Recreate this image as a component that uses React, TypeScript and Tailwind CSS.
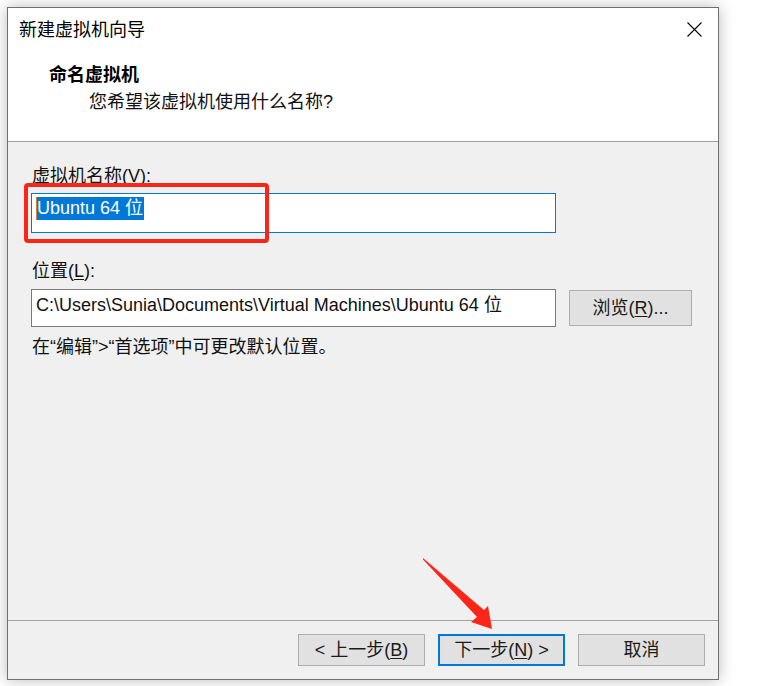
import React from "react";

const F = "font-['Liberation_Sans','Noto_Sans_CJK_SC',sans-serif]";

function Btn({ children, primary }: { children: React.ReactNode; primary?: boolean }) {
  return (
    <div
      className={
        "w-[127px] h-[32px] flex items-center justify-center bg-[#e1e1e1] text-[18px] leading-[24px] text-[#1a1a1a] " +
        (primary ? "border-2 border-[#0078d7]" : "border border-[#adadad]")
      }
    >
      {children}
    </div>
  );
}

export default function App() {
  return (
    <div className={"relative w-[769px] h-[686px] bg-white pt-[7px] pl-[7px] overflow-hidden " + F}>
      <div className="relative w-[712px] h-[673px] border border-[#707070] bg-[#f0f0f0] flex flex-col shadow-[0_0_14px_rgba(0,0,0,0.28)]">
        {/* header */}
        <div className="h-[134px] bg-white border-b border-[#a0a0a0] flex flex-col">
          <div className="mt-[10px] h-[24px] flex items-center justify-between pl-[11px] pr-[16px]">
            <span className="text-[18px] leading-[24px] text-black">新建虚拟机向导</span>
            <svg width="15" height="15" viewBox="0 0 15 15" className="mt-[-2px]">
              <path d="M0.5 0.5 L14.5 14.5 M14.5 0.5 L0.5 14.5" stroke="#000" strokeWidth="1.1" fill="none" />
            </svg>
          </div>
          <div className="mt-[21px] pl-[41px] text-[18px] leading-[24px] font-bold text-black">命名虚拟机</div>
          <div className="mt-[3px] pl-[81px] text-[18px] leading-[24px] text-[#111]">您希望该虚拟机使用什么名称?</div>
        </div>

        {/* body */}
        <div className="flex-1 flex flex-col pl-[23px] pt-[22px]">
          <div className="pl-[1px] text-[18px] leading-[24px] text-[#111]">
            虚拟机名称(<span className="underline underline-offset-2">V</span>):
          </div>
          <div className="mt-[5px] w-[525px] h-[40px] bg-white border border-[#0078d7] flex items-start pt-[3px] pl-[4px]">
            <span className="w-[1px] h-[23px] bg-[#e07a2a]"></span>
            <span className="h-[23px] bg-[#0078d7] text-white text-[18px] leading-[23px] pr-[1px]">Ubuntu 64 位</span>
          </div>

          <div className="mt-[26px] pl-[1px] text-[18px] leading-[24px] text-[#111]">
            位置(<span className="underline underline-offset-2">L</span>):
          </div>
          <div className="mt-[6px] flex items-center gap-[13px]">
            <div className="w-[525px] h-[38px] bg-white border border-[#7a7a7a] flex items-start pt-[3px] pl-[4px] text-[18px] leading-[24px] text-[#111]">
              C:\Users\Sunia\Documents\Virtual Machines\Ubuntu 64 位
            </div>
            <div className="w-[123px] h-[36px] bg-[#e1e1e1] border border-[#adadad] flex items-center justify-center text-[18px] leading-[24px] text-[#1a1a1a]">
              浏览(<span className="underline underline-offset-2">R</span>)...
            </div>
          </div>
          <div className="mt-[8px] pl-[1px] text-[18px] leading-[24px] text-[#111]">
            在“编辑”&gt;“首选项”中可更改默认位置。
          </div>
        </div>

        {/* footer */}
        <div className="h-[59px] border-t border-[#a0a0a0] flex justify-end items-start pt-[13px] pr-[13px] gap-[13px]">
          <Btn>
            &lt; 上一步(<span className="underline underline-offset-2">B</span>)
          </Btn>
          <Btn primary>
            下一步(<span className="underline underline-offset-2">N</span>) &gt;
          </Btn>
          <Btn>取消</Btn>
        </div>

        {/* red highlight box */}
        <div className="absolute left-[16px] top-[175px] w-[245px] h-[60px] border-[4px] border-[#fb2618] rounded-[4px] pointer-events-none"></div>
      </div>

      {/* red arrow */}
      <svg className="absolute left-0 top-0 pointer-events-none" width="769" height="686" viewBox="0 0 769 686">
        <polygon
          points="423,558 484,610 488,606 492,629 471,622 477,617 423,559.5"
          fill="#fb2618"
        />
      </svg>
    </div>
  );
}
